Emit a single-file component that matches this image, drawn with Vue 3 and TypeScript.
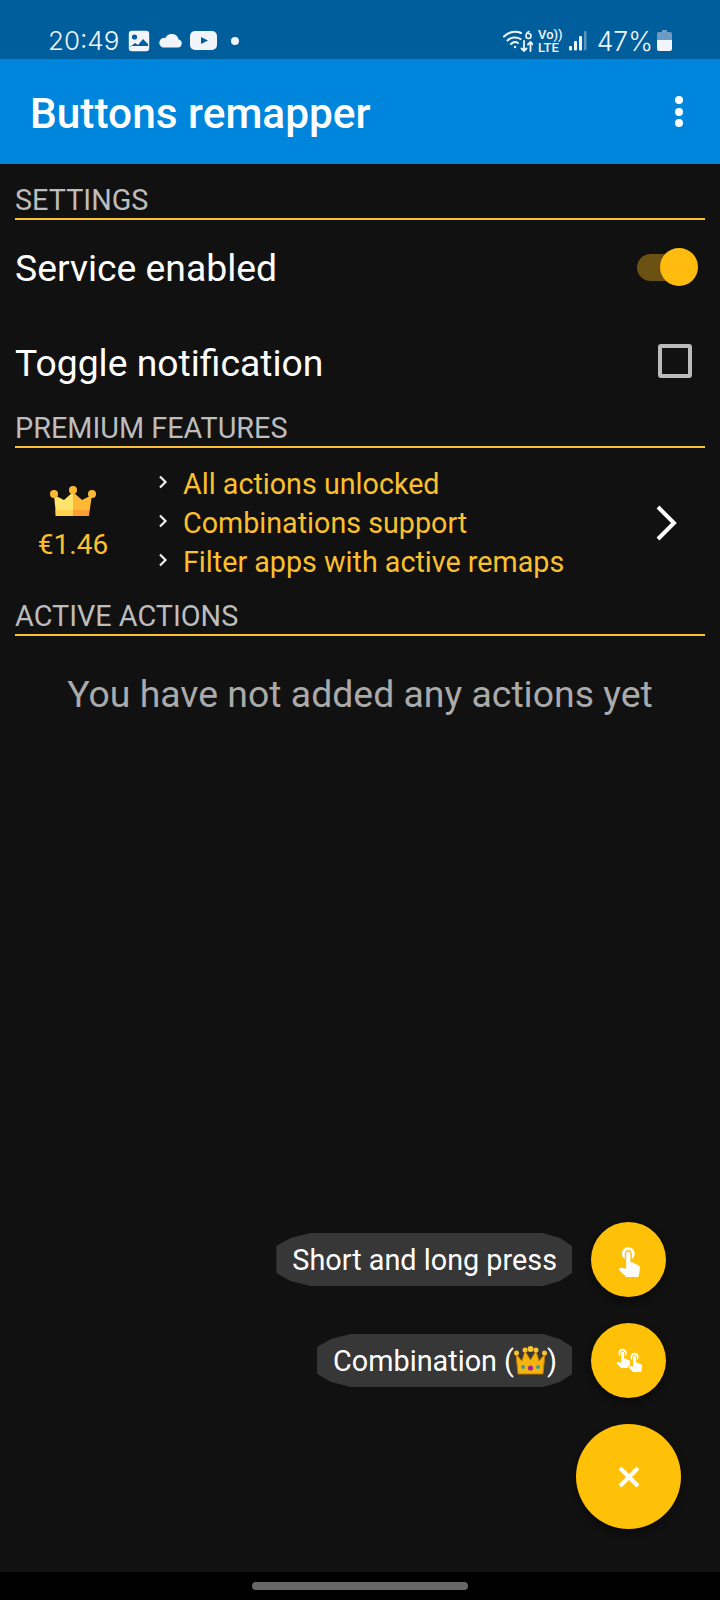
<script setup lang="ts">
import { ref } from "vue";

interface FabAction {
  id: string;
  label: string;
  crown?: boolean;
}

const serviceEnabled = ref(true);
const toggleNotification = ref(false);

const features = ["All actions unlocked", "Combinations support", "Filter apps with active remaps"];

const actions: FabAction[] = [
  { id: "press", label: "Short and long press" },
  { id: "combo", label: "Combination (", crown: true },
];

const touchPath =
  "M9 11.24V7.5C9 6.12 10.12 5 11.5 5S14 6.12 14 7.5v3.74c1.21-.81 2-2.18 2-3.74C16 5.01 13.99 3 11.5 3S7 5.01 7 7.5c0 1.56.79 2.93 2 3.74zm9.84 4.63l-4.54-2.26c-.17-.07-.35-.11-.54-.11H13v-6c0-.83-.67-1.5-1.5-1.5S10 6.67 10 7.5v10.74l-3.43-.72c-.08-.01-.15-.03-.24-.03-.31 0-.59.13-.79.33l-.79.8 4.94 4.94c.27.27.65.44 1.06.44h6.79c.75 0 1.33-.55 1.44-1.28l.75-5.27c.01-.07.02-.14.02-.2 0-.62-.38-1.16-.91-1.38z";
</script>

<template>
  <div class="page">
    <div class="status">
      <span class="clock">20:49</span>
      <svg class="st-gallery" width="22" height="22" viewBox="0 0 22 22">
        <rect x="0.8" y="0.8" width="20.4" height="20.4" rx="3" fill="#f1f5fa" />
        <circle cx="6.5" cy="7" r="2.6" fill="#005e9c" />
        <path d="M2 17l5-4 3 2 5-6 5 5v2H2z" fill="#005e9c" />
      </svg>
      <svg class="st-cloud" width="24" height="15" viewBox="0 0 24 15">
        <path d="M5 14.5h15a4 4 0 0 0 .6-7.9A7 7 0 0 0 7.4 5 4.8 4.8 0 0 0 5 14.5z" fill="#f1f5fa" />
      </svg>
      <svg class="st-video" width="27" height="19" viewBox="0 0 27 19">
        <rect width="27" height="19" rx="5" fill="#f1f5fa" />
        <path d="M11 6l7 3.5-7 3.5z" fill="#005e9c" />
      </svg>
      <span class="st-dot"></span>
      <span class="spacer"></span>
      <svg width="30" height="24" viewBox="0 0 30 24" fill="none" stroke="#f1f5fa" stroke-linecap="round">
        <path d="M1 7.5C6 2.5 13 1.5 18 4" stroke-width="2" />
        <path d="M4.5 11.5c3.5-3.5 9-4 13-1.5" stroke-width="2" />
        <path d="M8 15c2-2 5-2.300 7-1" stroke-width="2" />
        <circle cx="12" cy="18" r="1.200" fill="#f1f5fa" stroke="none" />
        <path d="M21 12V22M18.500 19.500L21 22l2.500-2.500M27.500 22V13M25 15.500L27.500 13l2.500 2.500" stroke-width="1.800" />
        <path d="M26 2.500c-2 1-3 3-3 4.500a2.500 2.500 0 1 0 2.500-2.500" stroke-width="1.600" />
      </svg>
      <span class="volte"><span>Vo))</span><span>LTE</span></span>
      <svg class="st-signal" width="18" height="20" viewBox="0 0 18 20">
        <rect x="0" y="15" width="3" height="4.500" rx="1" fill="#f1f5fa" />
        <rect x="5" y="10" width="3" height="9.500" rx="1" fill="#f1f5fa" />
        <rect x="10" y="5" width="3" height="14.500" rx="1" fill="#f1f5fa" />
        <rect x="15" y="0" width="2.500" height="19.500" rx="1" fill="#5d93bd" />
      </svg>
      <span class="battery-text">47%</span>
      <svg class="st-battery" width="15" height="21" viewBox="0 0 15 21">
        <path d="M5 0h5v2h3a2 2 0 0 1 2 2v6H0V4a2 2 0 0 1 2-2h3z" fill="#6c9cc4" />
        <path d="M0 10h15v9a2 2 0 0 1-2 2H2a2 2 0 0 1-2-2z" fill="#f1f5fa" />
      </svg>
    </div>

    <header class="appbar">
      <h1>Buttons remapper</h1>
      <div class="kebab"><span></span><span></span><span></span></div>
    </header>

    <main class="content">
      <div class="section-head settings-head">SETTINGS</div>

      <div class="row" @click="serviceEnabled = !serviceEnabled">
        <span>Service enabled</span>
        <span class="switch" :class="{ 'switch--on': serviceEnabled }"><i></i></span>
      </div>
      <div class="row" @click="toggleNotification = !toggleNotification">
        <span>Toggle notification</span>
        <span class="check" :class="{ 'check--on': toggleNotification }"></span>
      </div>

      <div class="section-head">PREMIUM FEATURES</div>

      <div class="premium">
        <div class="price">
          <svg width="46" height="30" viewBox="0 0 46 30">
            <path d="M4 9l2 20h17V6l-9 8z" fill="#ffe36b" />
            <path d="M42 9l-3 20H23V6l9 8z" fill="#ffb833" />
            <rect x="5.500" y="24" width="17.500" height="6" fill="#ffd24d" />
            <rect x="23" y="24" width="16" height="6" fill="#ff9f33" />
            <circle cx="4" cy="8" r="4" fill="#ffb833" />
            <circle cx="23" cy="4" r="4" fill="#ffb833" />
            <circle cx="42" cy="8" r="4" fill="#ffb833" />
          </svg>
          <span>€1.46</span>
        </div>
        <ul class="features">
          <li v-for="f in features" :key="f">
            <svg width="10" height="14" viewBox="0 0 10 14" fill="none" stroke="#eee" stroke-width="2.200">
              <path d="M2 1.500L7.500 7 2 12.500" />
            </svg>
            <span>{{ f }}</span>
          </li>
        </ul>
        <svg class="chevron" width="26" height="38" viewBox="0 0 26 38" fill="none" stroke="#fff" stroke-width="4">
          <path d="M4 3l16 16L4 35" />
        </svg>
      </div>

      <div class="section-head">ACTIVE ACTIONS</div>
      <p class="empty">You have not added any actions yet</p>

      <div class="fabs">
        <div v-for="a in actions" :key="a.id" class="fab-row">
          <span class="fab-label">
            {{ a.label }}<template v-if="a.crown">
              <svg class="emoji" width="33" height="29" viewBox="0 0 33 29">
                <path d="M2 8l6 7 3-10 5.500 9L22 5l3 10 6-7-2 20H4z" fill="#f5b40f" stroke="#b97a0c" stroke-width="1" />
                <circle cx="2.500" cy="7" r="2.500" fill="#f7c331" />
                <circle cx="11" cy="4" r="2.500" fill="#f7c331" />
                <circle cx="16.500" cy="3" r="3" fill="#f7c331" />
                <circle cx="22" cy="4" r="2.500" fill="#f7c331" />
                <circle cx="30.500" cy="7" r="2.500" fill="#f7c331" />
                <circle cx="16.500" cy="22" r="2.600" fill="#a0268f" />
                <circle cx="9" cy="21" r="2" fill="#3f9c8f" />
                <circle cx="24" cy="21" r="2" fill="#3f9c8f" />
              </svg>)</template>
          </span>
          <button class="fab fab--small">
            <svg v-if="!a.crown" width="34" height="34" viewBox="0 0 24 24" fill="#fff">
              <path :d="touchPath" />
            </svg>
            <svg v-else width="42" height="42" viewBox="0 0 42 42" fill="#fff">
              <path :d="touchPath" transform="translate(4 6) scale(.92)" />
              <path :d="touchPath" transform="translate(16 10) scale(.92)" stroke="#ffc107" stroke-width="1.500" paint-order="stroke" />
            </svg>
          </button>
        </div>
        <button class="fab fab--main">
          <svg width="24" height="24" viewBox="0 0 24 24" fill="none" stroke="#fff" stroke-width="4">
            <path d="M3 3l18 18M21 3L3 21" />
          </svg>
        </button>
      </div>
    </main>

    <footer class="navbar"><span></span></footer>
  </div>
</template>

<style>
html,
body {
  margin: 0;
  background: #111;
}
</style>

<style scoped>
.page {
  width: 720px;
  height: 1600px;
  display: flex;
  flex-direction: column;
  font-family: Roboto, "Liberation Sans", sans-serif;
  background: #111;
  overflow: hidden;
}

.status {
  height: 59px;
  flex-shrink: 0;
  box-sizing: border-box;
  padding: 22px 48px 0 48px;
  display: flex;
  align-items: center;
  background: #005e9c;
  color: #f1f5fa;
}
.clock {
  font-size: 26px;
  font-family: Inter, Roboto, sans-serif;
  font-weight: 300;
  width: 80px;
}
.st-cloud {
  margin-left: 8px;
}
.st-video {
  margin-left: 8px;
}
.st-dot {
  width: 8px;
  height: 8px;
  margin-left: 14px;
  border-radius: 50%;
  background: #f1f5fa;
}
.spacer {
  flex: 1;
}
.volte {
  display: flex;
  flex-direction: column;
  margin-left: 5px;
  font-size: 13px;
  line-height: 13px;
  font-weight: 500;
}
.st-signal {
  margin-left: 6px;
}
.battery-text {
  margin-left: 10px;
  font-size: 26.500px;
  font-family: Inter, Roboto, sans-serif;
  font-weight: 300;
}
.st-battery {
  margin-left: 4px;
}

.appbar {
  height: 105px;
  flex-shrink: 0;
  box-sizing: border-box;
  padding: 0 37px 0 30px;
  display: flex;
  align-items: center;
  justify-content: space-between;
  background: #0085dd;
  color: #fff;
}
.appbar h1 {
  margin: 3px 0 0;
  font-size: 42.400px;
  font-weight: 500;
}
.kebab {
  display: flex;
  flex-direction: column;
  gap: 3.500px;
}
.kebab span {
  width: 8px;
  height: 8px;
  border-radius: 50%;
  background: #fff;
}

.content {
  flex: 1;
  position: relative;
  padding: 0 15px;
}

.section-head {
  height: 38px;
  box-sizing: border-box;
  padding-top: 2px;
  border-bottom: 2px solid #fbc02d;
  color: #bdbdbd;
  font-size: 28.800px;
  line-height: 32px;
}
.settings-head {
  height: 56px;
  padding-top: 20px;
}

.row {
  height: 95px;
  display: flex;
  align-items: center;
  justify-content: space-between;
  color: #fff;
  font-size: 37.300px;
}
.switch {
  position: relative;
  width: 58px;
  height: 27px;
  margin-right: 10px;
  border-radius: 14px;
  background: #6b5212;
}
.switch i {
  position: absolute;
  top: -6px;
  left: 0;
  width: 38px;
  height: 38px;
  border-radius: 50%;
  background: #ffbb0e;
}
.switch--on i {
  left: 23px;
}
.check {
  width: 34px;
  height: 34px;
  box-sizing: border-box;
  margin: -4px 13px 0 0;
  border: 4px solid #bbb;
  border-radius: 3px;
}
.check--on {
  background: #ffc107;
  border-color: #ffc107;
}

.premium {
  height: 150px;
  display: flex;
  align-items: center;
}
.price {
  width: 116px;
  margin-top: 1px;
  display: flex;
  flex-direction: column;
  align-items: center;
  gap: 12px;
  color: #fbc02d;
  font-size: 28px;
}
.features {
  flex: 1;
  margin: 0 0 0 27px;
  padding: 0;
  list-style: none;
  color: #fbc02d;
  font-size: 28.700px;
  line-height: 39px;
}
.features li {
  display: flex;
  align-items: center;
  gap: 15px;
}
.features li svg {
  margin-top: -5px;
}
.chevron {
  margin-right: 25px;
}

.empty {
  margin: 36px 0 0;
  text-align: center;
  color: #aaa;
  font-size: 37.400px;
  line-height: 44px;
}

.fabs {
  position: absolute;
  right: 39px;
  bottom: 43px;
  display: flex;
  flex-direction: column;
  align-items: flex-end;
  gap: 26px;
}
.fab-row {
  display: flex;
  align-items: center;
  gap: 19px;
  margin-right: 15px;
}
.fab-label {
  display: flex;
  align-items: center;
  height: 53px;
  padding: 0 15px 0 16px;
  color: #fff;
  font-size: 28.800px;
  background: #373737;
  clip-path: polygon(34px 0, calc(100% - 29px) 0, calc(100% - 12px) 5px, 100% 13px, 100% calc(100% - 13px), calc(100% - 12px) calc(100% - 5px), calc(100% - 29px) 100%, 34px 100%, 14px calc(100% - 5px), 0 calc(100% - 13px), 0 13px, 14px 5px);
}
.emoji {
  margin: 0;
}
.fab {
  display: flex;
  align-items: center;
  justify-content: center;
  padding: 0;
  border: none;
  border-radius: 50%;
  background: #ffc107;
  box-shadow: 0 4px 10px rgba(0, 0, 0, 0.45);
}
.fab--small {
  width: 75px;
  height: 75px;
}
.fab--main {
  width: 105px;
  height: 105px;
}

.navbar {
  height: 28px;
  flex-shrink: 0;
  display: flex;
  align-items: center;
  justify-content: center;
  background: #000;
}
.navbar span {
  width: 216px;
  height: 8px;
  border-radius: 4px;
  background: #666;
}
</style>
